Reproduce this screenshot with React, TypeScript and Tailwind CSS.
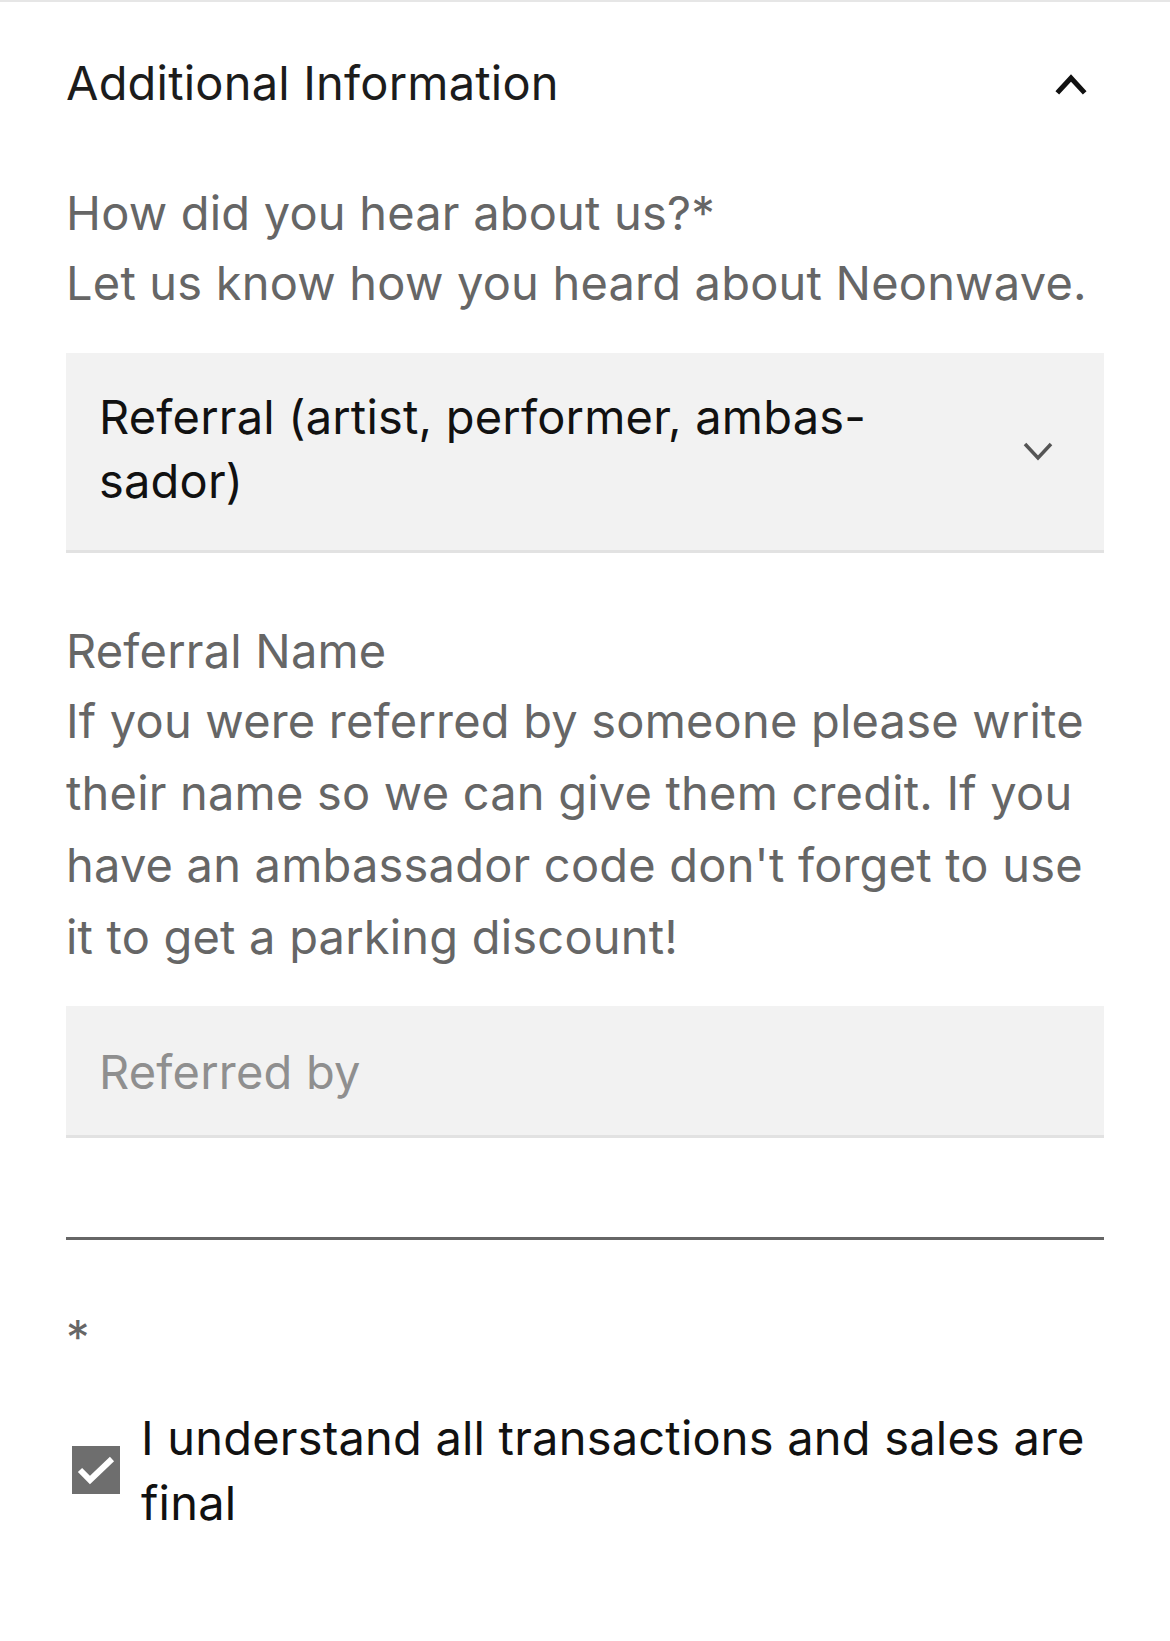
import { useState } from "react";

const font = { fontFamily: "Inter, 'Noto Sans', sans-serif" };

function ChevronUp() {
  return (
    <svg width="32" height="24" viewBox="0 0 32 24" className="mr-[17px]">
      <polyline points="4,20 16,7 28,20" fill="none" stroke="#111" strokeWidth="5" strokeLinecap="square" strokeLinejoin="miter" />
    </svg>
  );
}

function ChevronDown() {
  return (
    <svg width="32" height="24" viewBox="0 0 32 24" className="shrink-0 mr-[50px] mt-[6px]">
      <polyline points="3,4 16,18 29,4" fill="none" stroke="#555" strokeWidth="3.5" />
    </svg>
  );
}

export default function App() {
  const [agreed, setAgreed] = useState(true);
  const [referredBy, setReferredBy] = useState("");

  return (
    <div className="min-h-[1641px] bg-white border-t-2 border-[#e6e6e6] tracking-[0.2px]" style={font}>
      <div className="px-[66px]">
        {/* Section header */}
        <div className="flex items-center justify-between pt-[53px]">
          <h2 className="text-[47px] leading-[56px] text-[#1c1c1c] font-normal">Additional Information</h2>
          <ChevronUp />
        </div>

        {/* How did you hear */}
        <div className="mt-[68px]">
          <p className="text-[47px] leading-[68px] text-[#666]">How did you hear about us?*</p>
          <p className="text-[47px] leading-[72px] text-[#666]">Let us know how you heard about Neonwave.</p>
        </div>

        <div className="mt-[34px] flex items-center justify-between bg-[#f2f2f2] border-b-[3px] border-[#e2e2e2] pl-[33px] pt-[32px] pb-[37px]">
          <div className="text-[47px] leading-[64px] text-[#111]">
            Referral (artist, performer, ambas-
            <br />
            sador)
          </div>
          <ChevronDown />
        </div>

        {/* Referral name */}
        <div className="mt-[64px]">
          <p className="text-[47px] leading-[68px] text-[#666]">Referral Name</p>
          <p className="text-[47px] leading-[72px] text-[#666]">
            If you were referred by someone please write their name so we can give them credit. If you have an ambassador code don't forget to use it to get a parking discount!
          </p>
        </div>

        <div className="mt-[33px] bg-[#f2f2f2] border-b-[3px] border-[#e2e2e2] pl-[33px] pr-[33px] pt-[34px] pb-[31px]">
          <input
            value={referredBy}
            onChange={(e) => setReferredBy(e.target.value)}
            placeholder="Referred by"
            className="w-full bg-transparent outline-none text-[47px] leading-[64px] h-[64px] tracking-[0.2px] text-[#111] placeholder:text-[#8f8f8f]"
            style={font}
          />
        </div>

        <div className="mt-[99px] h-[3px] bg-[#666]" />

        {/* Terms */}
        <p className="mt-[63px] text-[47px] leading-[68px] text-[#666]">*</p>

        <label className="mt-[34px] flex items-center gap-[21px] cursor-pointer">
          <button
            type="button"
            onClick={() => setAgreed(!agreed)}
            className="ml-[6px] w-[48px] h-[48px] shrink-0 bg-[#6e6e6e]"
          >
            {agreed && (
              <svg width="48" height="48" viewBox="0 0 48 48">
                <polyline points="8,24 18,34 40,13" fill="none" stroke="#fff" strokeWidth="6" />
              </svg>
            )}
          </button>
          <span className="text-[47px] leading-[65px] text-[#111]">I understand all transactions and sales are final</span>
        </label>
      </div>
    </div>
  );
}
